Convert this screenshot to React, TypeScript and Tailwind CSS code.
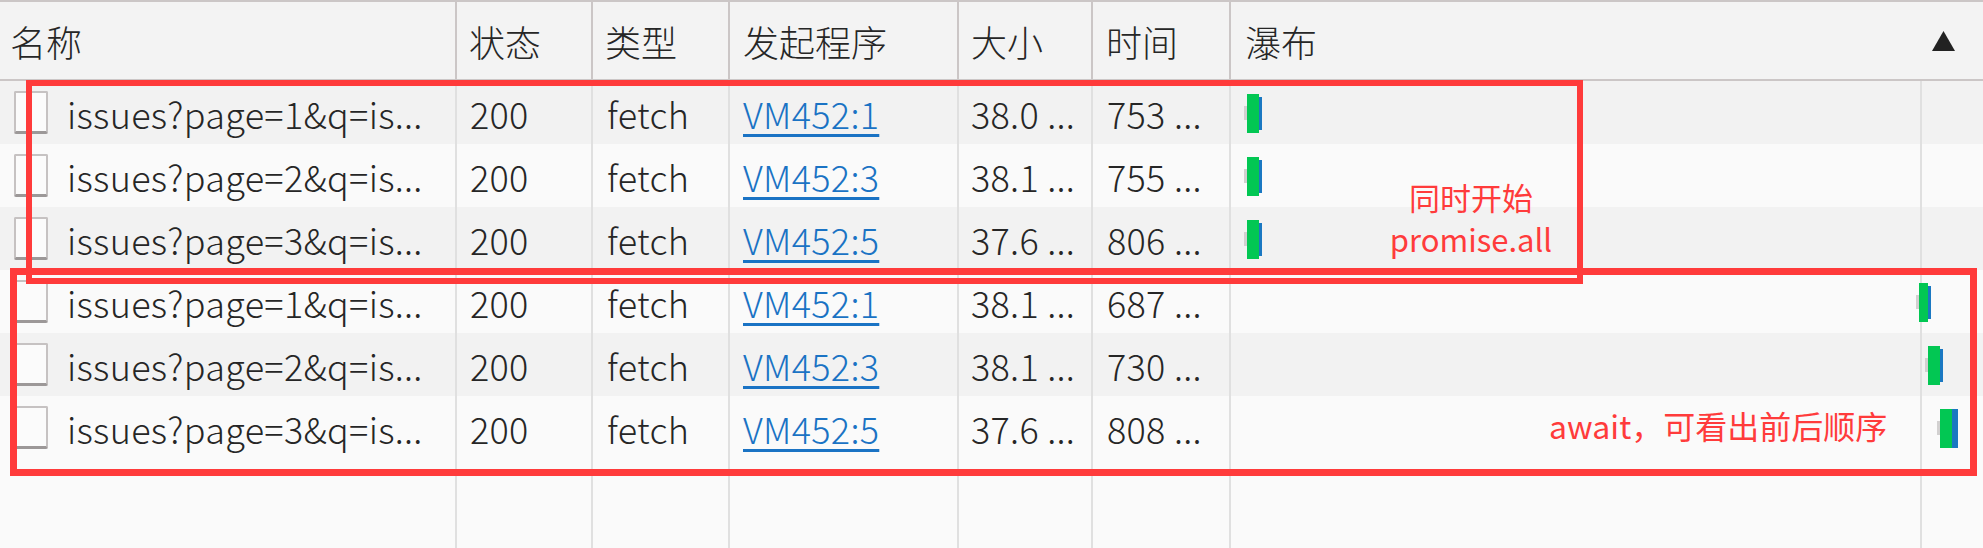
const rows = [
  { page: 1, init: 'VM452:1', size: '38.0 ...', time: '753 ...', bg: 'bg-[#f2f2f2]', bars: { stub: 13, green: 16, gw: 12, blue: 28, bw: 3, full: false } },
  { page: 2, init: 'VM452:3', size: '38.1 ...', time: '755 ...', bg: 'bg-[#fafafa]', bars: { stub: 13, green: 16, gw: 12, blue: 28, bw: 3, full: false } },
  { page: 3, init: 'VM452:5', size: '37.6 ...', time: '806 ...', bg: 'bg-[#f2f2f2]', bars: { stub: 13, green: 16, gw: 12, blue: 28, bw: 3, full: false } },
  { page: 1, init: 'VM452:1', size: '38.1 ...', time: '687 ...', bg: 'bg-[#fafafa]', bars: { stub: 685, green: 688, gw: 9, blue: 697, bw: 3, full: false } },
  { page: 2, init: 'VM452:3', size: '38.1 ...', time: '730 ...', bg: 'bg-[#f2f2f2]', bars: { stub: 694, green: 697, gw: 12, blue: 709, bw: 3, full: false } },
  { page: 3, init: 'VM452:5', size: '37.6 ...', time: '808 ...', bg: 'bg-[#fafafa]', bars: { stub: 706, green: 709, gw: 12, blue: 721, bw: 6, full: true } },
];

const cols = 'grid grid-cols-[455px_136px_137px_229px_134px_138px_1fr]';

export default function App() {
  return (
    <main className="relative w-[1983px] h-[548px] overflow-hidden bg-[#fafafa] text-[#262626] text-[36px] font-light font-['Noto_Sans_CJK_SC','Liberation_Sans',sans-serif] flex flex-col">
      {/* header */}
      <div className={`${cols} h-[81px] bg-[#f3f3f3] border-t-2 border-b-2 border-[#cbc6c6]`}>
        <div className="flex items-center pl-[10px]">名称</div>
        <div className="flex items-center pl-[12px] border-l-2 border-[#cbc6c6]">状态</div>
        <div className="flex items-center pl-[12px] border-l-2 border-[#cbc6c6]">类型</div>
        <div className="flex items-center pl-[13px] border-l-2 border-[#cbc6c6]">发起程序</div>
        <div className="flex items-center pl-[12px] border-l-2 border-[#cbc6c6]">大小</div>
        <div className="flex items-center pl-[13px] border-l-2 border-[#cbc6c6]">时间</div>
        <div className="flex items-center justify-between pl-[14px] pr-[28px] border-l-2 border-[#cbc6c6]">
          <span>瀑布</span>
          <svg width="23" height="20" viewBox="0 0 23 20">
            <polygon points="11.5,0 23,20 0,20" fill="#222" />
          </svg>
        </div>
      </div>

      {/* rows */}
      {rows.map((r, i) => (
        <div key={i} className={`${cols} h-[63px] tracking-[0.3px] ${r.bg}`}>
          <div className="flex items-center pl-[14px] gap-[19px]">
            <span className="w-[34px] h-[43px] rounded-[2px] border-2 border-[#c6c2c2] border-b-[3px] border-b-[#9c9898] bg-[#fbfbfb]" />
            <span>issues?page={r.page}&amp;q=is...</span>
          </div>
          <div className="flex items-center pl-[13px] border-l-2 border-[#e0e0e0]">200</div>
          <div className="flex items-center pl-[14px] border-l-2 border-[#e0e0e0]">fetch</div>
          <div className="flex items-center pl-[13px] border-l-2 border-[#e0e0e0]">
            <span className="text-[#1a73c4] underline decoration-[3px] underline-offset-[5px]">{r.init}</span>
          </div>
          <div className="flex items-center pl-[12px] border-l-2 border-[#e0e0e0]">{r.size}</div>
          <div className="flex items-center pl-[14px] border-l-2 border-[#e0e0e0]">{r.time}</div>
          <div className="relative border-l-2 border-[#e0e0e0]">
            <div className="absolute left-[689px] top-0 w-[2px] h-full bg-[#e0e0e0]" />
            <div className="absolute top-[25px] h-[14px] w-[3px] bg-[#d2d0d0]" style={{ left: r.bars.stub }} />
            <div className="absolute top-[13px] h-[39px] bg-[#02c753]" style={{ left: r.bars.green, width: r.bars.gw }} />
            <div
              className={`absolute bg-[#1a78c2] ${r.bars.full ? 'top-[13px] h-[39px]' : 'top-[16px] h-[33px]'}`}
              style={{ left: r.bars.blue, width: r.bars.bw }}
            />
          </div>
        </div>
      ))}

      {/* empty area below rows */}
      <div className={`${cols} flex-1`}>
        <div />
        <div className="border-l-2 border-[#e0e0e0]" />
        <div className="border-l-2 border-[#e0e0e0]" />
        <div className="border-l-2 border-[#e0e0e0]" />
        <div className="border-l-2 border-[#e0e0e0]" />
        <div className="border-l-2 border-[#e0e0e0]" />
        <div className="relative border-l-2 border-[#e0e0e0]">
          <div className="absolute left-[689px] top-0 w-[2px] h-full bg-[#e0e0e0]" />
        </div>
      </div>

      {/* annotations */}
      <div className="absolute left-[26px] top-[80px] w-[1557px] h-[204px] border-[6px] border-[#ff3b3b]" />
      <div className="absolute left-[10px] top-[268px] w-[1967px] h-[208px] border-[7px] border-[#ff3b3b]" />
      <div className="absolute left-[1383px] top-[176px] w-[176px] text-center text-[31px] font-normal leading-[42px] text-[#ff3b3b]">
        <div>同时开始</div>
        <div>promise.all</div>
      </div>
      <div className="absolute left-[1549px] top-[405px] text-[32px] font-normal leading-[40px] text-[#ff3b3b]">
        await，可看出前后顺序
      </div>
    </main>
  );
}
